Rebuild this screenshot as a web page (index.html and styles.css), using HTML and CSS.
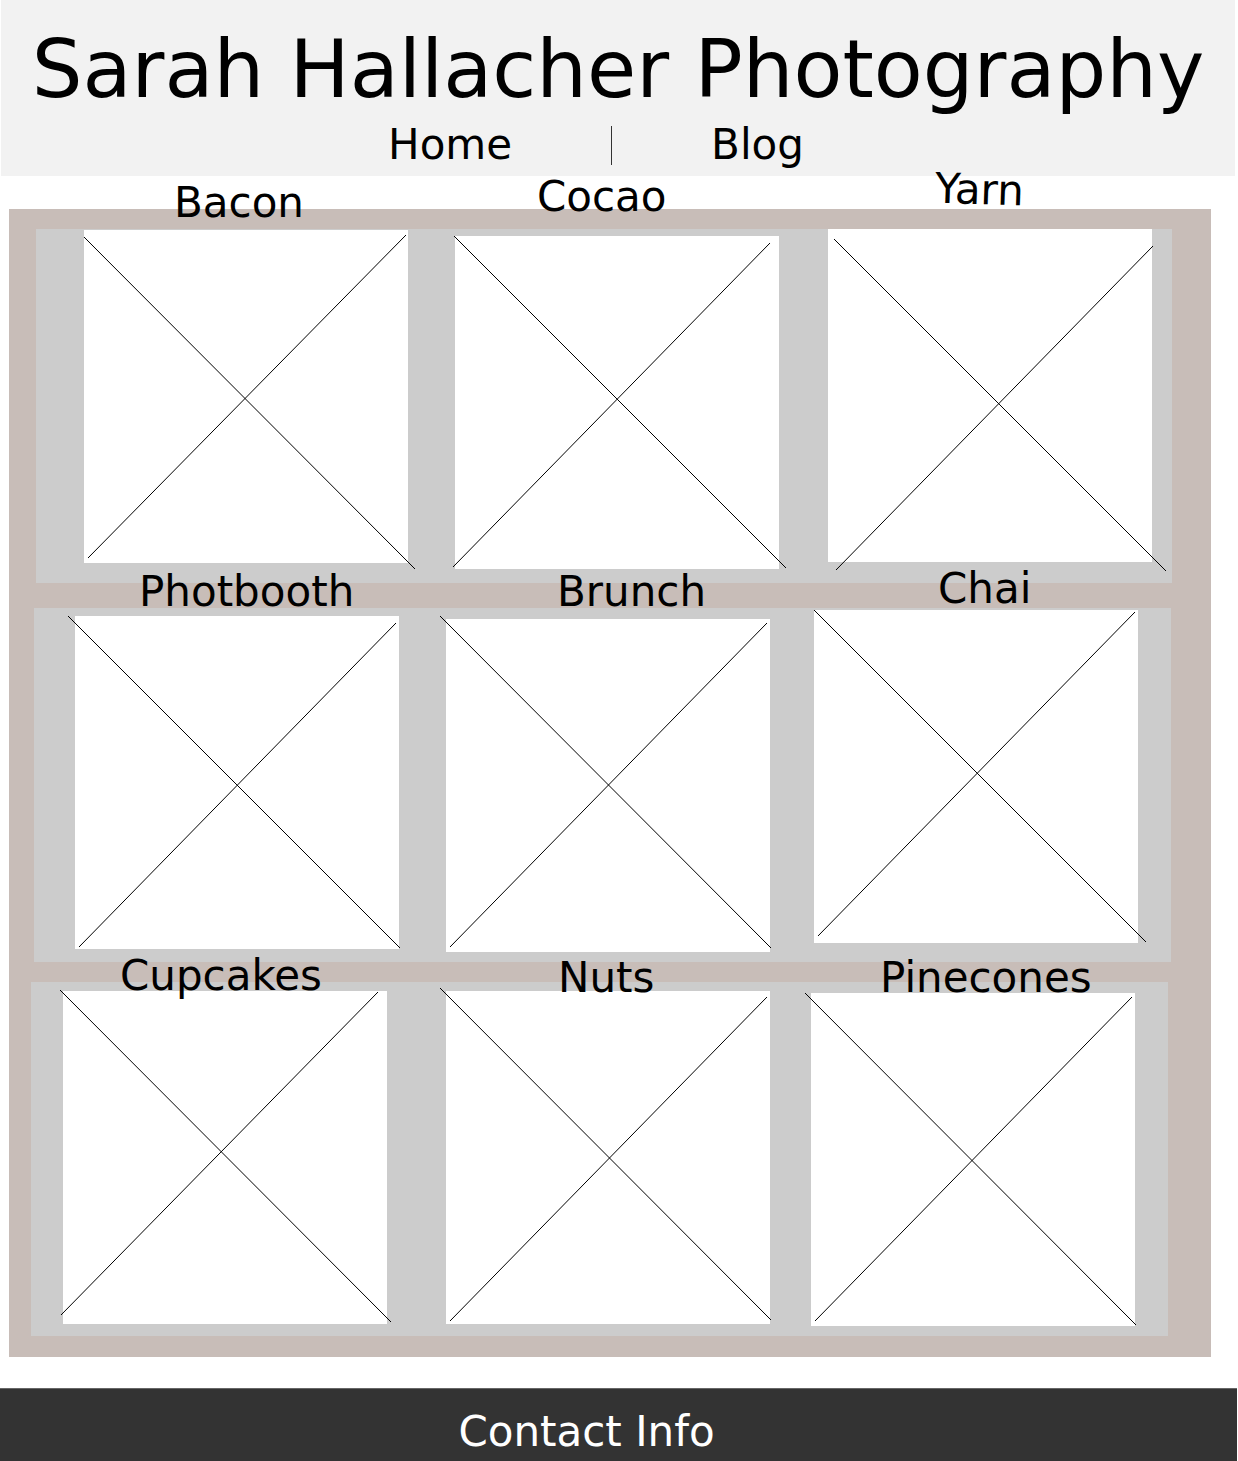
FILE: index.html
```html
<!DOCTYPE html>
<html lang="en">
<head>
<meta charset="utf-8">
<meta name="viewport" content="width=device-width, initial-scale=1">
<title>Sarah Hallacher Photography</title>
<link rel="stylesheet" href="styles.css">
</head>
<body>
<header class="site-header">
  <h1 class="site-title">Sarah Hallacher Photography</h1>
  <nav class="site-nav">
    <a href="#home">Home</a>
    <span class="divider"></span>
    <a href="#blog">Blog</a>
  </nav>
</header>

<main class="gallery">
  <section class="row row-first">
    <figure class="tile bacon">
      <svg class="cross" viewBox="0 0 324 333"><path d="M0 7L331 339M322 5L4 328"/></svg>
      <figcaption>Bacon</figcaption>
    </figure>
    <figure class="tile cocao">
      <svg class="cross" viewBox="0 0 324 333"><path d="M-1 0L331 332M315 7L-2 331"/></svg>
      <figcaption>Cocao</figcaption>
    </figure>
    <figure class="tile yarn">
      <svg class="cross" viewBox="0 0 324 333"><path d="M6 10L338 342M325 17L8 341"/></svg>
      <figcaption>Yarn</figcaption>
    </figure>
  </section>

  <section class="row row-second">
    <figure class="tile photbooth">
      <svg class="cross" viewBox="0 0 324 333"><path d="M-7 0L325 332M321 7L4 331"/></svg>
      <figcaption>Photbooth</figcaption>
    </figure>
    <figure class="tile brunch">
      <svg class="cross" viewBox="0 0 324 333"><path d="M-6 -3L325 329M321 4L4 328"/></svg>
      <figcaption>Brunch</figcaption>
    </figure>
    <figure class="tile chai">
      <svg class="cross" viewBox="0 0 324 333"><path d="M0 0L332 332M321 2L4 326"/></svg>
      <figcaption>Chai</figcaption>
    </figure>
  </section>

  <section class="row row-third">
    <figure class="tile cupcakes">
      <svg class="cross" viewBox="0 0 324 333"><path d="M-3 -1L328 331M315 1L-2 324"/></svg>
      <figcaption>Cupcakes</figcaption>
    </figure>
    <figure class="tile nuts">
      <svg class="cross" viewBox="0 0 324 333"><path d="M-6 -3L325 329M321 6L4 330"/></svg>
      <figcaption>Nuts</figcaption>
    </figure>
    <figure class="tile pinecones">
      <svg class="cross" viewBox="0 0 324 333"><path d="M-6 0L325 332M321 4L4 328"/></svg>
      <figcaption>Pinecones</figcaption>
    </figure>
  </section>
</main>

<footer class="site-footer">Contact Info</footer>
</body>
</html>
```

FILE: styles.css
```css
* {
  box-sizing: border-box;
}

body {
  margin: 0;
  background: #fff;
  color: #000;
  font-family: Verdana, "DejaVu Sans", sans-serif;
  font-size: 42px;
  line-height: 48px;
}

/* Header */
.site-header {
  margin: 0 3px 0 1px;
  padding: 23px 0 7px;
  background: #f2f2f2;
}

.site-title {
  margin: 0 0 4px;
  font-size: 80px;
  font-weight: 400;
  line-height: 94px;
  text-align: center;
  white-space: nowrap;
}

.site-nav {
  display: flex;
  justify-content: center;
  align-items: center;
  gap: 99px;
  padding: 0 44px 0 0;
}

.site-nav a {
  color: inherit;
  text-decoration: none;
}

.divider {
  width: 1px;
  height: 39px;
  background: #333;
}

/* Gallery */
.gallery {
  display: flex;
  flex-direction: column;
  margin: 33px 27px 31px 9px;
  padding: 20px 0 21px;
  background: #c8bdb8;
}

.row {
  display: flex;
  align-items: flex-start;
  background: #ccc;
}

.row-first {
  margin: 0 39px 25px 27px;
  padding: 0 20px 14px 48px;
}

.row-second {
  margin: 0 40px 20px 25px;
  padding: 0 33px 10px 41px;
}

.row-third {
  margin: 0 43px 0 22px;
  padding: 0 33px 10px 32px;
}

.tile {
  position: relative;
  flex: 1;
  margin: 0;
  background: #fff;
}

.cross {
  display: block;
  width: 100%;
  overflow: visible;
  fill: none;
  stroke: #000;
  stroke-width: 1;
}

.tile figcaption {
  position: absolute;
  white-space: nowrap;
}

/* Tiles hang loosely in their rows, each caption pinned over its top edge */
.bacon { margin-top: 1px; }
.bacon figcaption { top: -51px; left: 90px; }

.cocao { margin: 7px 49px 0 47px; }
.cocao figcaption { top: -63px; left: 82px; }

.yarn figcaption { top: -63px; left: 107px; transform: rotate(2deg); }

.photbooth { margin-top: 8px; }
.photbooth figcaption { top: -48px; left: 64px; }

.brunch { margin: 11px 44px 0 47px; }
.brunch figcaption { top: -51px; left: 111px; }

.chai { margin-top: 2px; }
.chai figcaption { top: -45px; left: 124px; }

.cupcakes { margin-top: 9px; }
.cupcakes figcaption { top: -39px; left: 57px; }

.nuts { margin: 9px 41px 0 59px; }
.nuts figcaption { top: -37px; left: 112px; }

.pinecones { margin-top: 11px; }
.pinecones figcaption { top: -39px; left: 69px; }

/* Footer */
.site-footer {
  margin-right: 1px;
  padding: 19px 64px 5px 0;
  border-top: 1px solid #666;
  background: #333;
  color: #fff;
  text-align: center;
}
```
